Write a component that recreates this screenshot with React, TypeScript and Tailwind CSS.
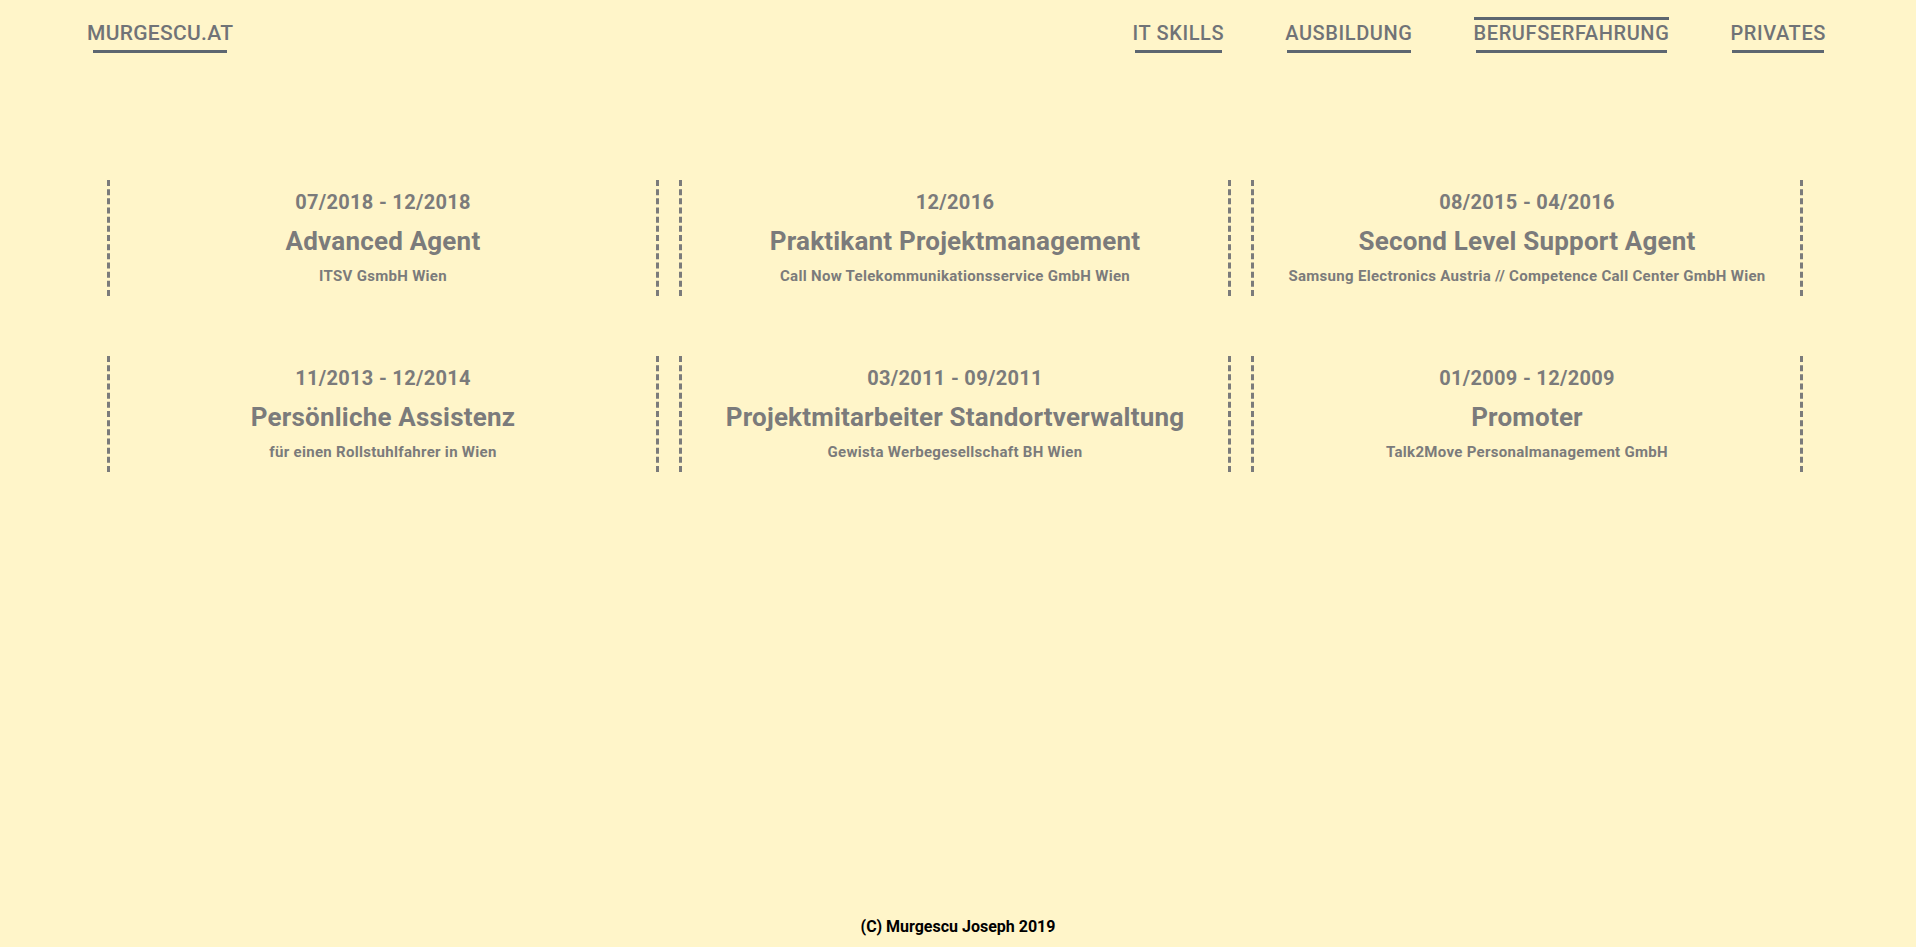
import React from 'react';

interface Job {
  id: number;
  period: string;
  title: string;
  company: string;
}

const jobs: Job[] = [
  { id: 1, period: '07/2018 - 12/2018', title: 'Advanced Agent', company: 'ITSV GsmbH Wien' },
  { id: 2, period: '12/2016', title: 'Praktikant Projektmanagement', company: 'Call Now Telekommunikationsservice GmbH Wien' },
  { id: 3, period: '08/2015 - 04/2016', title: 'Second Level Support Agent', company: 'Samsung Electronics Austria // Competence Call Center GmbH Wien' },
  { id: 4, period: '11/2013 - 12/2014', title: 'Persönliche Assistenz', company: 'für einen Rollstuhlfahrer in Wien' },
  { id: 5, period: '03/2011 - 09/2011', title: 'Projektmitarbeiter Standortverwaltung', company: 'Gewista Werbegesellschaft BH Wien' },
  { id: 6, period: '01/2009 - 12/2009', title: 'Promoter', company: 'Talk2Move Personalmanagement GmbH' },
];

const navItems = [
  { id: 'skills', label: 'IT SKILLS' },
  { id: 'ausbildung', label: 'AUSBILDUNG' },
  { id: 'beruf', label: 'BERUFSERFAHRUNG' },
  { id: 'privates', label: 'PRIVATES' },
];

const App: React.FC = () => {
  const active = 'beruf';

  return (
    <div
      className="min-h-screen flex flex-col bg-[#fff5c9]"
      style={{ fontFamily: 'Roboto, "Liberation Sans", sans-serif' }}
    >
      {/* Header */}
      <header className="flex justify-between pl-[87px] pr-[90px]">
        <a href="#" className="flex flex-col pt-[23px]">
          <span className="text-[21px] leading-[21px] font-medium tracking-[0.3px] text-[#707377]">
            MURGESCU.AT
          </span>
          <div className="h-[3px] mt-[6px] mx-[6px] bg-[#5d6670]" />
        </a>

        <nav className="flex gap-[61px]">
          {navItems.map((item) => (
            <a key={item.id} href="#" className="flex flex-col pt-[17px]">
              <div className={`h-[3px] ${item.id === active ? 'bg-[#5d6670]' : 'bg-transparent'}`} />
              <span className="mt-[3px] text-[20px] leading-[20px] font-medium tracking-[0.6px] text-[#707377]">
                {item.label}
              </span>
              <div className="h-[3px] mt-[7px] mx-[2px] bg-[#5d6670]" />
            </a>
          ))}
        </nav>
      </header>

      {/* Berufserfahrung */}
      <main className="flex-1 pt-[127px]">
        <div className="ml-[107px] w-[1696px] grid grid-cols-3 gap-x-[20px] gap-y-[60px]">
          {jobs.map((job) => (
            <div
              key={job.id}
              className="flex flex-col items-center text-center pt-[10px] pb-[10px] border-x-[3px] border-dashed border-[#7b7b7b] text-[#7b7b7b] font-bold"
            >
              <div className="text-[20px] leading-[24px] tracking-[0.3px]">{job.period}</div>
              <div className="mt-[11px] text-[26px] leading-[32px] tracking-[0.2px]">{job.title}</div>
              <div className="mt-[9px] text-[15px] leading-[20px] tracking-[0.3px]">{job.company}</div>
            </div>
          ))}
        </div>
      </main>

      <footer className="pb-[10px] text-center text-[16px] leading-[20px] font-bold text-black">
        (C) Murgescu Joseph 2019
      </footer>
    </div>
  );
};

export default App;
